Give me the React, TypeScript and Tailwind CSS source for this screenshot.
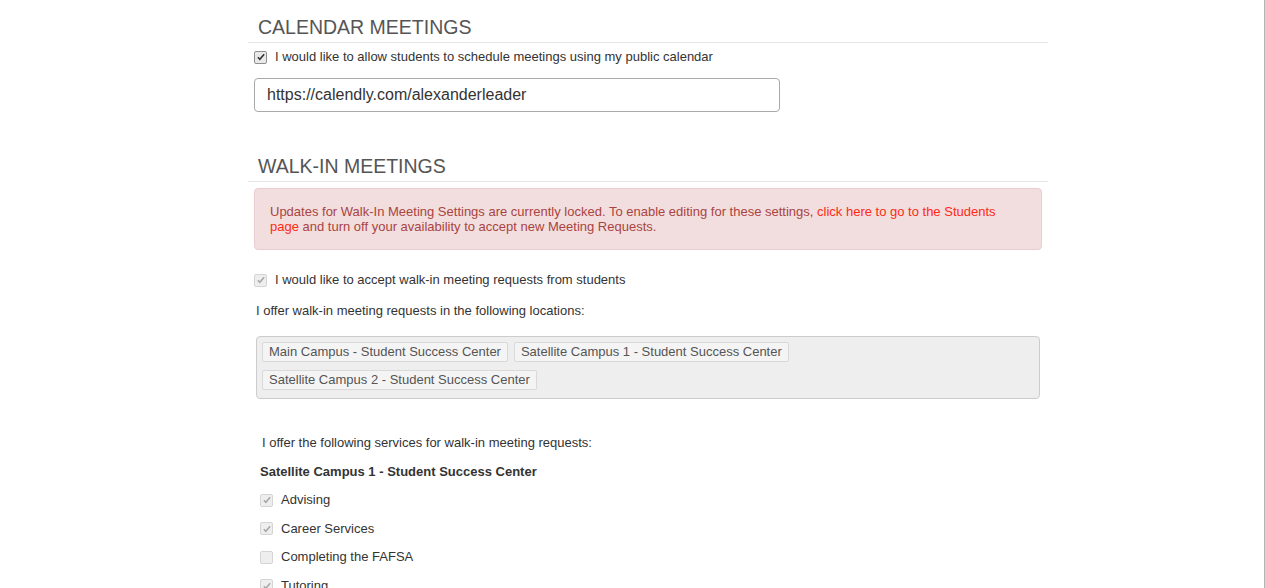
import React from 'react';

const font = { fontFamily: '"Liberation Sans", Arial, sans-serif' };

interface CheckProps {
  checked?: boolean;
  disabled?: boolean;
}

const Check: React.FC<CheckProps> = ({ checked = false, disabled = false }) => (
  <span
    className={`inline-flex h-[13px] w-[13px] shrink-0 items-center justify-center rounded-[2px] border ${
      disabled ? 'border-[#d4d4d4] bg-[#eeeeee]' : 'border-[#8f8f8f] bg-[#e9e9e9]'
    }`}
  >
    {checked && (
      <svg viewBox="0 0 12 12" className="h-[10px] w-[10px]">
        <path
          d="M2.2 6.3 L4.6 8.7 L9.8 2.8"
          fill="none"
          stroke={disabled ? '#a8a8a8' : '#333333'}
          strokeWidth="1.9"
        />
      </svg>
    )}
  </span>
);

const SectionHeading: React.FC<{ title: string }> = ({ title }) => (
  <div className="border-b border-[#e5e5e5] px-[10px] pb-[3px]">
    <h2 className="text-[19.5px] leading-[24px] text-[#555555]">{title}</h2>
  </div>
);

const Tag: React.FC<{ label: string }> = ({ label }) => (
  <span className="flex h-[20px] items-center rounded-[2px] border border-[#d9d9d9] bg-[#f4f4f4] px-[6px] text-[13px] text-[#555555]">
    {label}
  </span>
);

const services = [
  { name: 'Advising', checked: true },
  { name: 'Career Services', checked: true },
  { name: 'Completing the FAFSA', checked: false },
  { name: 'Tutoring', checked: true },
];

export default function App() {
  return (
    <div className="h-[588px] overflow-hidden border-r border-[#b4b4b4] bg-white text-[#333333]" style={font}>
      <div className="ml-[248px] w-[800px] pt-[15px]">
        {/* Calendar meetings */}
        <SectionHeading title="CALENDAR MEETINGS" />
        <label className="mt-[6px] flex items-center gap-[8px] pl-[6px] text-[13px] leading-[16px]">
          <Check checked />
          <span>I would like to allow students to schedule meetings using my public calendar</span>
        </label>
        <div className="mt-[13px] pl-[6px]">
          <div className="flex h-[34px] w-[526px] items-center rounded-[4px] border border-[#a9a9a9] px-[12px] text-[16px]">
            https://calendly.com/alexanderleader
          </div>
        </div>

        {/* Walk-in meetings */}
        <div className="mt-[42px]">
          <SectionHeading title="WALK-IN MEETINGS" />
        </div>
        <div className="mx-[6px] mt-[6px] w-[788px] rounded-[4px] border border-[#ebccd1] bg-[#f2dede] px-[15px] py-[15px] text-[13px] leading-[15px] text-[#a94442]">
          Updates for Walk-In Meeting Settings are currently locked. To enable editing for these settings,{' '}
          <a className="text-[#ff2a14]">click here to go to the Students page</a> and turn off your availability to
          accept new Meeting Requests.
        </div>

        <label className="mt-[22px] flex items-center gap-[8px] pl-[6px] text-[13px] leading-[16px]">
          <Check checked disabled />
          <span>I would like to accept walk-in meeting requests from students</span>
        </label>
        <p className="mt-[15px] pl-[8px] text-[13px] leading-[16px]">
          I offer walk-in meeting requests in the following locations:
        </p>
        <div className="ml-[8px] mt-[17px] flex w-[784px] flex-wrap gap-x-[6px] gap-y-[8px] rounded-[4px] border border-[#cccccc] bg-[#eeeeee] px-[5px] pb-[8px] pt-[5px]">
          <Tag label="Main Campus - Student Success Center" />
          <Tag label="Satellite Campus 1 - Student Success Center" />
          <Tag label="Satellite Campus 2 - Student Success Center" />
        </div>

        <p className="mt-[36px] pl-[14px] text-[13px] leading-[16px]">
          I offer the following services for walk-in meeting requests:
        </p>
        <p className="mt-[13px] pl-[12px] text-[13px] font-bold leading-[16px]">
          Satellite Campus 1 - Student Success Center
        </p>
        <div className="mt-[12px] flex flex-col gap-[12.5px] pl-[12px]">
          {services.map((s) => (
            <label key={s.name} className="flex items-center gap-[8px] text-[13px] leading-[16px]">
              <Check checked={s.checked} disabled />
              <span>{s.name}</span>
            </label>
          ))}
        </div>
      </div>
    </div>
  );
}
